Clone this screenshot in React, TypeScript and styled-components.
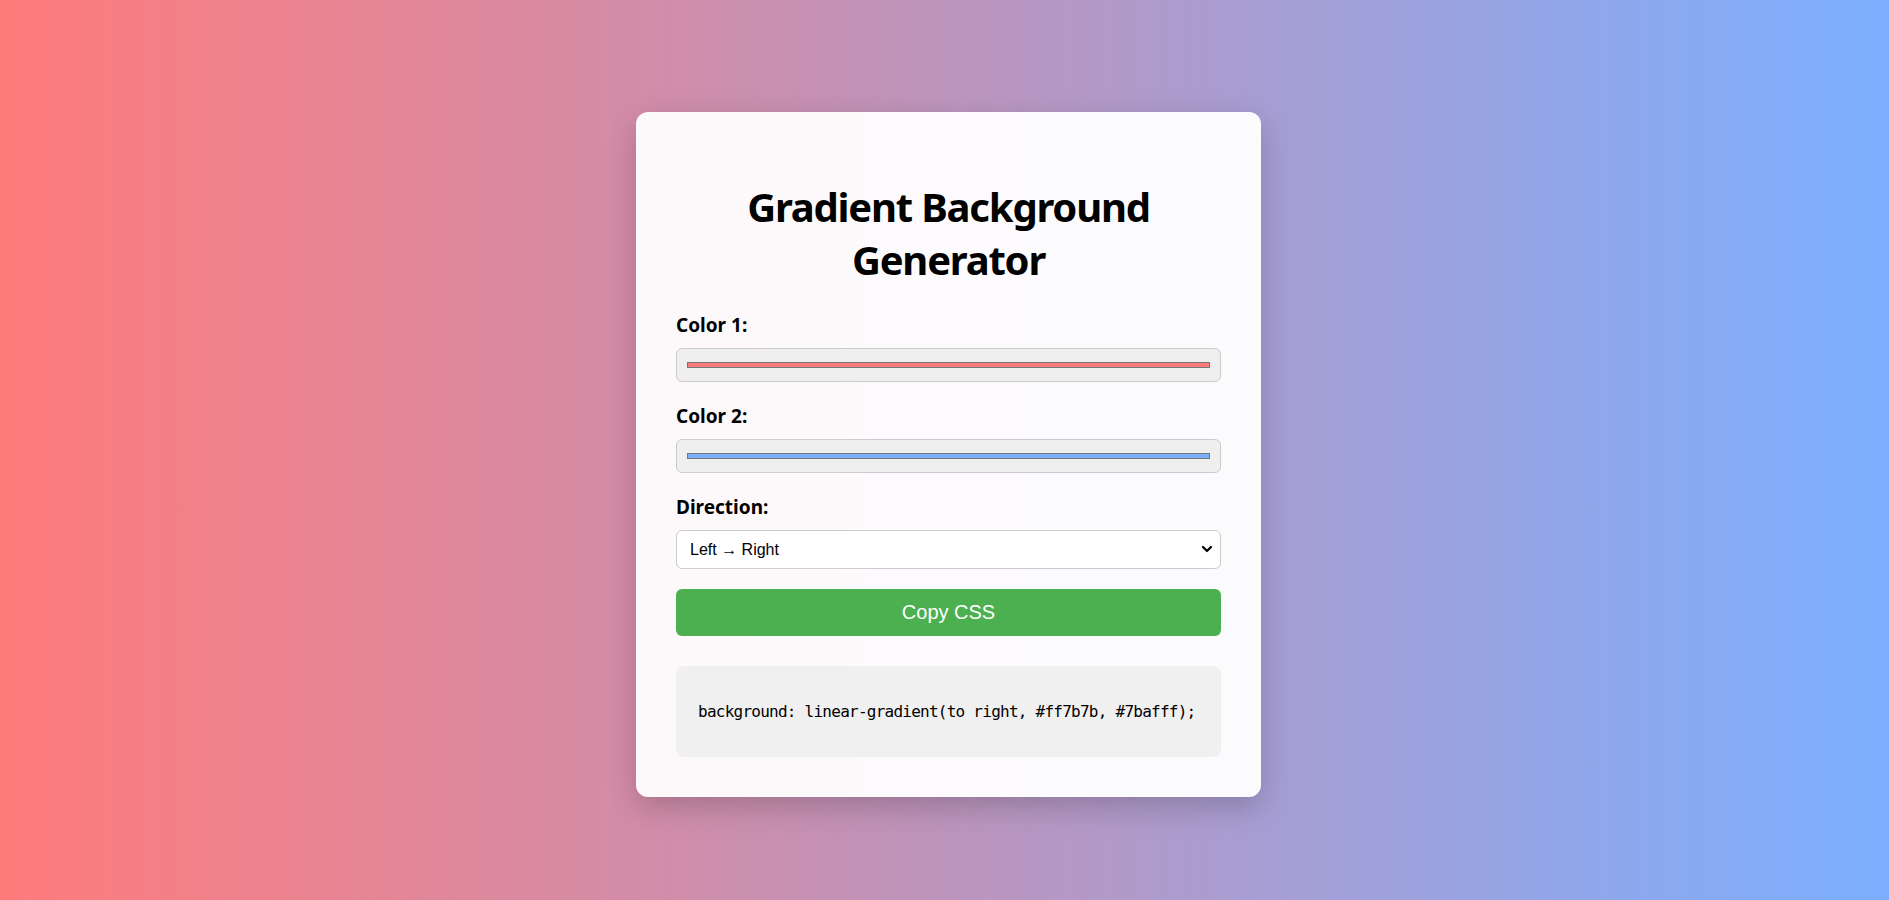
import React, { useState } from "react";
import styled, { createGlobalStyle } from "styled-components";

const GlobalStyle = createGlobalStyle`
  html, body {
    margin: 0;
    padding: 0;
  }
  body {
    font-family: "Noto Sans", "Open Sans", sans-serif;
    background: linear-gradient(to right, #ff7b7b, #7bafff);
    min-height: 100vh;
  }
  * { box-sizing: border-box; }
`;

const Page = styled.div`
  min-height: 100vh;
  display: flex;
  align-items: center;
  justify-content: center;
  padding: 8px 0 0 8px;
`;

const Card = styled.div`
  width: 625px;
  padding: 40px;
  border-radius: 12px;
  background: rgba(255, 255, 255, 0.95);
  box-shadow: 0 10px 30px rgba(0, 0, 0, 0.2);
`;

const Title = styled.h1`
  margin: 28px 0 28px;
  font-family: "Noto Sans", sans-serif;
  font-size: 40px;
  line-height: 53px;
  font-weight: 700;
  letter-spacing: -1.2px;
  text-align: center;
  color: #000;
`;

const Field = styled.div<{ $gap?: number }>`
  display: flex;
  flex-direction: column;
  margin-bottom: ${(p) => p.$gap ?? 23}px;
`;

const Label = styled.label`
  display: block;
  font-family: "Noto Sans", sans-serif;
  font-size: 19px;
  line-height: 22px;
  font-weight: 700;
  color: #000;
  margin-bottom: 12px;
`;

const ColorInput = styled.input`
  -webkit-appearance: none;
  appearance: none;
  width: 100%;
  height: 34px;
  padding: 9px 8px;
  margin: 0;
  border: 1px solid #cccccc;
  border-radius: 6px;
  background: #efefef;
  cursor: pointer;

  &::-webkit-color-swatch-wrapper {
    padding: 4px 2px;
  }
  &::-webkit-color-swatch {
    border: 1px solid #777777;
    border-radius: 0;
  }
`;

const SelectWrap = styled.div`
  position: relative;
  width: 100%;
`;

const Select = styled.select`
  -webkit-appearance: none;
  appearance: none;
  width: 100%;
  height: 39px;
  padding: 0 30px 0 13px;
  margin: 0;
  border: 1px solid #cccccc;
  border-radius: 6px;
  background: #ffffff;
  font-family: "Liberation Sans", Arial, "DejaVu Sans", sans-serif;
  font-size: 16px;
  color: #000;
`;

const Chevron = styled.svg`
  position: absolute;
  right: 8px;
  top: 50%;
  width: 12px;
  height: 12px;
  transform: translateY(-50%);
  pointer-events: none;
`;

const CopyButton = styled.button`
  display: block;
  width: 100%;
  height: 47px;
  margin: 0 0 30px;
  padding: 0;
  border: none;
  border-radius: 6px;
  background: #4caf50;
  color: #ffffff;
  font-family: "Liberation Sans", Arial, sans-serif;
  font-size: 20px;
  line-height: 23px;
  cursor: pointer;
`;

const CodeBox = styled.div`
  background: #f0f0f0;
  border-radius: 8px;
  padding: 36px 22px;
  font-family: "DejaVu Sans Mono", "Liberation Mono", monospace;
  font-size: 16px;
  line-height: 19px;
  letter-spacing: -0.75px;
  color: #000;
  white-space: nowrap;
`;

const directions: { value: string; label: string }[] = [
  { value: "to right", label: "Left → Right" },
  { value: "to left", label: "Right → Left" },
  { value: "to bottom", label: "Top → Bottom" },
  { value: "to top", label: "Bottom → Top" },
  { value: "45deg", label: "Diagonal ↗" },
  { value: "135deg", label: "Diagonal ↘" },
];

export default function App() {
  const [c1, setC1] = useState("#ff7b7b");
  const [c2, setC2] = useState("#7bafff");
  const [dir, setDir] = useState("to right");
  const css = `background: linear-gradient(${dir}, ${c1}, ${c2});`;

  return (
    <>
      <GlobalStyle />
      <Page>
        <Card>
          <Title>Gradient Background Generator</Title>
          <Field>
            <Label htmlFor="c1">Color 1:</Label>
            <ColorInput id="c1" type="color" value={c1} onChange={(e) => setC1(e.target.value)} />
          </Field>
          <Field>
            <Label htmlFor="c2">Color 2:</Label>
            <ColorInput id="c2" type="color" value={c2} onChange={(e) => setC2(e.target.value)} />
          </Field>
          <Field $gap={20}>
            <Label htmlFor="dir">Direction:</Label>
            <SelectWrap>
              <Select id="dir" value={dir} onChange={(e) => setDir(e.target.value)}>
                {directions.map((d) => (
                  <option key={d.value} value={d.value}>
                    {d.label}
                  </option>
                ))}
              </Select>
              <Chevron viewBox="0 0 12 12" aria-hidden="true">
                <path d="M2 4 L6 8 L10 4" fill="none" stroke="#000" strokeWidth="2.2" strokeLinecap="round" strokeLinejoin="round" />
              </Chevron>
            </SelectWrap>
          </Field>
          <CopyButton type="button">Copy CSS</CopyButton>
          <CodeBox>{css}</CodeBox>
        </Card>
      </Page>
    </>
  );
}
